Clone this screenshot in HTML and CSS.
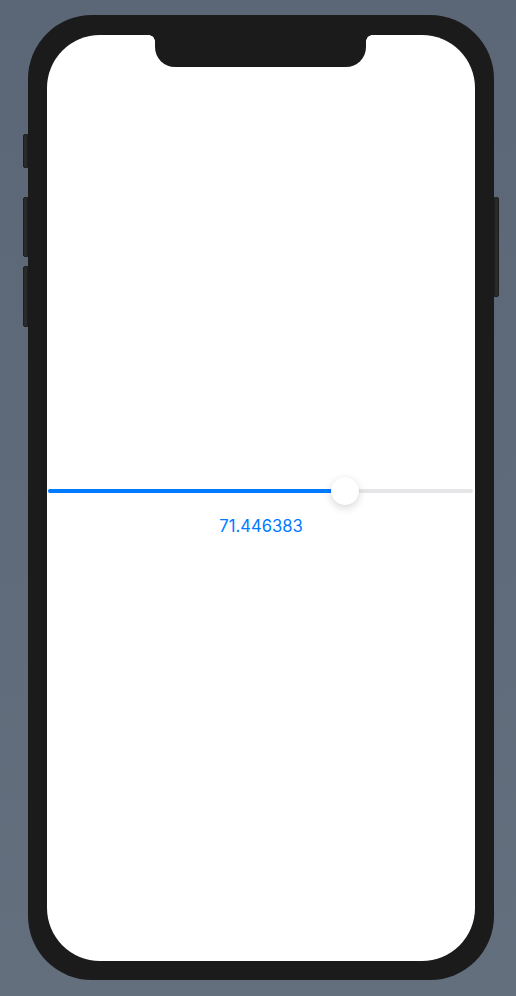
FILE: index.html
```html
<!DOCTYPE html>
<html lang="en">

<head>
  <meta charset="UTF-8">
  <meta name="viewport" content="width=device-width, initial-scale=1.0">
  <title>Slider preview</title>
  <link rel="stylesheet" href="styles.css">
</head>

<body>
  <div class="phone">
    <!-- side buttons -->
    <span class="side-btn mute"></span>
    <span class="side-btn vol-up"></span>
    <span class="side-btn vol-down"></span>
    <span class="side-btn power"></span>

    <div class="screen">
      <div class="notch"></div>

      <div class="content">
        <div class="slider">
          <div class="track">
            <div class="fill" style="width: calc(14px + 0.71446383 * (100% - 28px));"></div>
          </div>
          <div class="thumb" style="left: calc(14px + 0.71446383 * (100% - 28px));"></div>
        </div>
        <p class="value">71.446383</p>
      </div>
    </div>
  </div>
</body>

</html>
```

FILE: styles.css
```css
html,
body {
  height: 100%;
}

body {
  margin: 0;
  background: linear-gradient(#5b6676, #646f7e);
  padding: 15px 0 0 28px;
  box-sizing: border-box;
  font-family: Inter, "Noto Sans", sans-serif;
}

.phone {
  position: relative;
  width: 466px;
  height: 965px;
  padding: 20px 19px 19px 19px;
  box-sizing: border-box;
  background-color: #1b1b1b;
  border-radius: 64px;
}

.side-btn {
  position: absolute;
  width: 5px;
  background-color: #2a2a2a;
  border: 1px solid #1e1e1e;
  box-sizing: border-box;
}

.mute,
.vol-up,
.vol-down {
  left: -5px;
  border-radius: 2px 0 0 2px;
}

.mute {
  top: 119px;
  height: 34px;
}

.vol-up {
  top: 182px;
  height: 60px;
}

.vol-down {
  top: 251px;
  height: 61px;
}

.power {
  right: -5px;
  top: 182px;
  height: 100px;
  border-radius: 0 2px 2px 0;
}

.screen {
  position: relative;
  width: 428px;
  height: 926px;
  background-color: #fff;
  border-radius: 53px;
  overflow: hidden;
  display: flex;
  flex-direction: column;
  justify-content: center;
}

.notch {
  position: absolute;
  top: 0;
  left: 108px;
  width: 211px;
  height: 32px;
  background-color: #1b1b1b;
  border-radius: 0 0 20px 20px;
}

.notch::before,
.notch::after {
  content: "";
  position: absolute;
  top: 0;
  width: 6px;
  height: 6px;
}

.notch::before {
  left: -6px;
  background: radial-gradient(circle at 0 100%, transparent 5.5px, #1b1b1b 6px);
}

.notch::after {
  right: -6px;
  background: radial-gradient(circle at 100% 100%, transparent 5.5px, #1b1b1b 6px);
}

.content {
  display: flex;
  flex-direction: column;
  align-items: center;
  gap: 10px;
  padding-top: 17px;
}

.slider {
  position: relative;
  width: 425px;
  height: 28px;
  margin-left: -2px;
  display: flex;
  align-items: center;
}

.track {
  width: 100%;
  height: 4px;
  border-radius: 2px;
  background-color: #e6e6e9;
  overflow: hidden;
}

.fill {
  height: 100%;
  background-color: #007aff;
}

.thumb {
  position: absolute;
  top: 0;
  width: 28px;
  height: 28px;
  margin-left: -14px;
  border-radius: 50%;
  background-color: #fff;
  box-shadow: 0 3px 8px rgba(0, 0, 0, 0.15), 0 0 0 0.5px rgba(0, 0, 0, 0.04);
}

.value {
  margin: 0;
  color: #007aff;
  font-size: 16.6px;
  line-height: 22px;
}
```
